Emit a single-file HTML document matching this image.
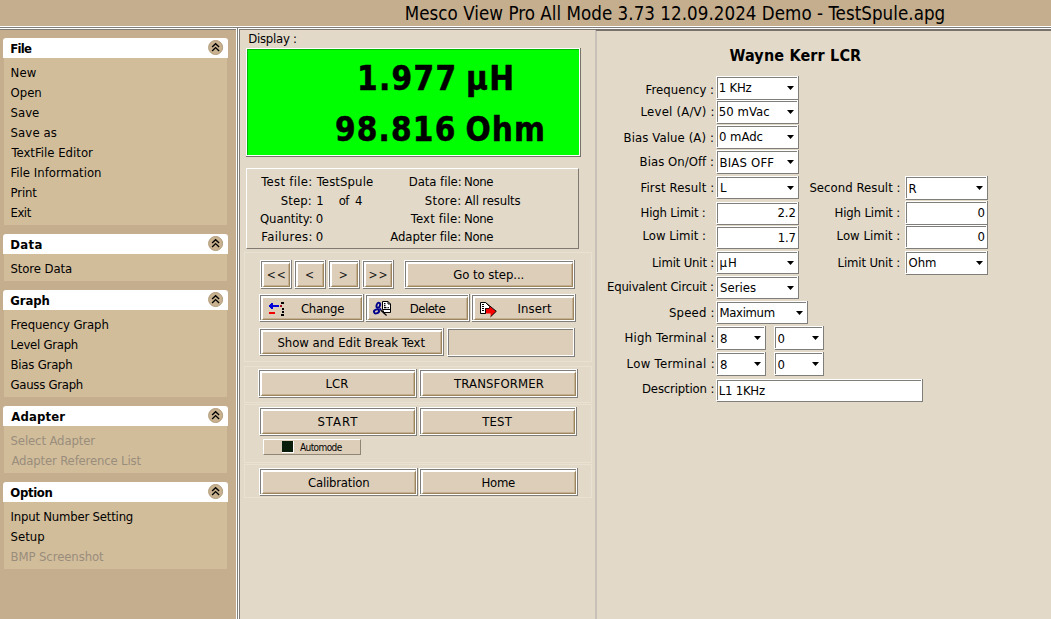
<!DOCTYPE html>
<html><head><meta charset="utf-8"><title>Mesco View Pro</title><style>
html,body{margin:0;padding:0;}
body{width:1051px;height:619px;position:relative;overflow:hidden;background:#c5ae8d;font-family:"DejaVu Sans Condensed","DejaVu Sans","Liberation Sans",sans-serif;font-size:13px;font-stretch:condensed;color:#000;}
body>div,body>svg{position:absolute;box-sizing:border-box;}
.t{white-space:nowrap;line-height:20px;height:20px;}
.b{font-weight:bold;}
.dis{color:#998d7b;}
.big{font-size:33px;font-weight:bold;letter-spacing:0.9px;line-height:40px;height:40px;-webkit-text-stroke:0.5px #000;}
.fg{border:1px solid #807e7a;}
.fw{border:1px solid #fff;}
.btn{background:#ddceb9;border-style:solid;border-width:2px 1px 1px 2px;border-color:#fff #9c845c #9c845c #fff;box-shadow:inset -1px -1px 0 rgba(150,118,74,0.35);}
</style></head><body>
<div style="left:0px;top:0px;width:1051px;height:26px;background:#c5ae8d;"></div>
<div class="t" style="left:404.80px;top:0px;font-size:18.6px;line-height:27px;height:27px;letter-spacing:0.04px;">Mesco View Pro All Mode 3.73 12.09.2024 Demo - TestSpule.apg</div>
<div style="left:0px;top:26px;width:1051px;height:1px;background:#fff;"></div>
<div style="left:0px;top:27px;width:1051px;height:1px;background:#807e7a;"></div>
<div style="left:0px;top:28px;width:1051px;height:1px;background:#fff;"></div>
<div style="left:0px;top:29px;width:1051px;height:1px;background:#7f7a74;"></div>
<div style="left:0px;top:30px;width:236px;height:589px;background:#c5ae8d;"></div>
<div style="left:236px;top:28px;width:1px;height:591px;background:#fff;"></div>
<div style="left:237px;top:27px;width:1px;height:592px;background:#807e7a;"></div>
<div style="left:238px;top:28px;width:1px;height:591px;background:#fff;"></div>
<div style="left:239px;top:29px;width:1px;height:590px;background:#7f7a74;"></div>
<div style="left:240px;top:30px;width:811px;height:589px;background:#e2d9c8;"></div>
<div style="left:595px;top:30px;width:2px;height:589px;background:#c9c1b8;"></div>
<div style="left:596px;top:29px;width:455px;height:2px;background:#77726c;"></div>
<div style="left:4px;top:58px;width:223px;height:167px;background:#d2bd9b;"></div>
<div style="left:3px;top:38px;width:225px;height:20px;background:#fff;border-radius:3px 3px 0 0;"></div>
<div class="t" style="left:10.30px;top:39px;font-weight:bold;letter-spacing:-0.77px;">File</div>
<svg style="left:208px;top:40px" width="16" height="16" viewBox="0 0 16 16"><circle cx="7.6" cy="7.5" r="7" fill="#c9b28f" stroke="#b09a78" stroke-width="1"/><path d="M4.1 7.1 L7.6 3.7 L11.1 7.1 M4.1 11 L7.6 7.6 L11.1 11" fill="none" stroke="#000" stroke-width="1.35"/></svg>
<div class="t" style="left:10.50px;top:63px;letter-spacing:0.15px;">New</div>
<div class="t" style="left:10.50px;top:83px;">Open</div>
<div class="t" style="left:10.50px;top:103px;letter-spacing:0.03px;">Save</div>
<div class="t" style="left:10.50px;top:123px;letter-spacing:0.13px;">Save as</div>
<div class="t" style="left:11.50px;top:143px;letter-spacing:0.01px;">TextFile Editor</div>
<div class="t" style="left:10.50px;top:163px;letter-spacing:0.01px;">File Information</div>
<div class="t" style="left:10.50px;top:183px;letter-spacing:-0.12px;">Print</div>
<div class="t" style="left:10.50px;top:203px;letter-spacing:-0.47px;">Exit</div>
<div style="left:4px;top:254px;width:223px;height:27px;background:#d2bd9b;"></div>
<div style="left:3px;top:234px;width:225px;height:20px;background:#fff;border-radius:3px 3px 0 0;"></div>
<div class="t" style="left:10.30px;top:235px;font-weight:bold;letter-spacing:0.33px;">Data</div>
<svg style="left:208px;top:236px" width="16" height="16" viewBox="0 0 16 16"><circle cx="7.6" cy="7.5" r="7" fill="#c9b28f" stroke="#b09a78" stroke-width="1"/><path d="M4.1 7.1 L7.6 3.7 L11.1 7.1 M4.1 11 L7.6 7.6 L11.1 11" fill="none" stroke="#000" stroke-width="1.35"/></svg>
<div class="t" style="left:10.50px;top:259px;letter-spacing:-0.10px;">Store Data</div>
<div style="left:4px;top:310px;width:223px;height:87px;background:#d2bd9b;"></div>
<div style="left:3px;top:290px;width:225px;height:20px;background:#fff;border-radius:3px 3px 0 0;"></div>
<div class="t" style="left:10.30px;top:291px;font-weight:bold;letter-spacing:-0.12px;">Graph</div>
<svg style="left:208px;top:292px" width="16" height="16" viewBox="0 0 16 16"><circle cx="7.6" cy="7.5" r="7" fill="#c9b28f" stroke="#b09a78" stroke-width="1"/><path d="M4.1 7.1 L7.6 3.7 L11.1 7.1 M4.1 11 L7.6 7.6 L11.1 11" fill="none" stroke="#000" stroke-width="1.35"/></svg>
<div class="t" style="left:10.50px;top:315px;letter-spacing:-0.11px;">Frequency Graph</div>
<div class="t" style="left:10.50px;top:335px;letter-spacing:-0.27px;">Level Graph</div>
<div class="t" style="left:10.50px;top:355px;letter-spacing:-0.21px;">Bias Graph</div>
<div class="t" style="left:10.50px;top:375px;letter-spacing:-0.27px;">Gauss Graph</div>
<div style="left:4px;top:426px;width:223px;height:47px;background:#d2bd9b;"></div>
<div style="left:3px;top:406px;width:225px;height:20px;background:#fff;border-radius:3px 3px 0 0;"></div>
<div class="t" style="left:11.30px;top:407px;font-weight:bold;letter-spacing:0.12px;">Adapter</div>
<svg style="left:208px;top:408px" width="16" height="16" viewBox="0 0 16 16"><circle cx="7.6" cy="7.5" r="7" fill="#c9b28f" stroke="#b09a78" stroke-width="1"/><path d="M4.1 7.1 L7.6 3.7 L11.1 7.1 M4.1 11 L7.6 7.6 L11.1 11" fill="none" stroke="#000" stroke-width="1.35"/></svg>
<div class="t dis" style="left:10.50px;top:431px;letter-spacing:-0.12px;">Select Adapter</div>
<div class="t dis" style="left:11.50px;top:451px;letter-spacing:-0.17px;">Adapter Reference List</div>
<div style="left:4px;top:502px;width:223px;height:67px;background:#d2bd9b;"></div>
<div style="left:3px;top:482px;width:225px;height:20px;background:#fff;border-radius:3px 3px 0 0;"></div>
<div class="t" style="left:10.30px;top:483px;font-weight:bold;letter-spacing:-0.34px;">Option</div>
<svg style="left:208px;top:484px" width="16" height="16" viewBox="0 0 16 16"><circle cx="7.6" cy="7.5" r="7" fill="#c9b28f" stroke="#b09a78" stroke-width="1"/><path d="M4.1 7.1 L7.6 3.7 L11.1 7.1 M4.1 11 L7.6 7.6 L11.1 11" fill="none" stroke="#000" stroke-width="1.35"/></svg>
<div class="t" style="left:10.50px;top:507px;letter-spacing:-0.20px;">Input Number Setting</div>
<div class="t" style="left:10.50px;top:527px;letter-spacing:0.05px;">Setup</div>
<div class="t dis" style="left:10.50px;top:547px;letter-spacing:-0.09px;">BMP Screenshot</div>
<div class="t" style="left:248.20px;top:29px;letter-spacing:-0.24px;">Display :</div>
<div style="left:246px;top:48px;width:335px;height:109px;background:#77736c;"></div>
<div style="left:246px;top:48px;width:334px;height:108px;background:#fff;"></div>
<div style="left:247px;top:49px;width:332px;height:106px;background:#00ff00;box-shadow:inset 1px 1px 0 rgba(0,90,0,0.45);"></div>
<div class="t big" style="left:357px;top:59px;word-spacing:-3px;letter-spacing:1.3px;">1.977 µH</div>
<div class="t big" style="left:335px;top:110px;word-spacing:-2.5px;letter-spacing:1.15px;">98.816 Ohm</div>
<div style="left:246px;top:168px;width:333px;height:81px;border:1px solid;border-color:#fff #807a70 #807a70 #fff;"></div>
<div class="t" style="left:261.30px;top:172px;letter-spacing:0.30px;">Test file:</div>
<div class="t" style="left:316.80px;top:172px;letter-spacing:0.11px;">TestSpule</div>
<div class="t" style="left:408.70px;top:172px;letter-spacing:-0.04px;">Data file:</div>
<div class="t" style="left:464.00px;top:172px;letter-spacing:-0.33px;">None</div>
<div class="t" style="left:280.80px;top:191px;letter-spacing:0.05px;">Step:</div>
<div class="t" style="left:316.30px;top:191px;">1</div>
<div class="t" style="left:424.80px;top:191px;letter-spacing:0.30px;">Store:</div>
<div class="t" style="left:464.70px;top:191px;letter-spacing:-0.14px;">All results</div>
<div class="t" style="left:260.00px;top:209px;letter-spacing:-0.12px;">Quantity:</div>
<div class="t" style="left:315.80px;top:209px;">0</div>
<div class="t" style="left:410.80px;top:209px;letter-spacing:0.17px;">Text file:</div>
<div class="t" style="left:464.00px;top:209px;letter-spacing:-0.33px;">None</div>
<div class="t" style="left:261.30px;top:227px;letter-spacing:0.34px;">Failures:</div>
<div class="t" style="left:315.80px;top:227px;">0</div>
<div class="t" style="left:390.30px;top:227px;letter-spacing:-0.08px;">Adapter file:</div>
<div class="t" style="left:464.00px;top:227px;letter-spacing:-0.33px;">None</div>
<div class="t" style="left:338.70px;top:191px;letter-spacing:-0.50px;">of</div>
<div class="t" style="left:355.00px;top:191px;">4</div>
<div class="fg" style="left:261px;top:261px;width:31px;height:28px;"></div>
<div class="fw" style="left:260px;top:260px;width:31px;height:28px;"></div>
<div style="left:291px;top:260px;width:1px;height:1px;background:#807e7a"></div>
<div class="btn" style="left:262px;top:262px;width:28px;height:25px;"></div>
<div class="t" style="left:266.80px;top:265px;font-size:12px;letter-spacing:0.80px;color:#1a1a1a;">&lt;&lt;</div>
<div class="fg" style="left:295px;top:261px;width:31px;height:28px;"></div>
<div class="fw" style="left:294px;top:260px;width:31px;height:28px;"></div>
<div style="left:325px;top:260px;width:1px;height:1px;background:#807e7a"></div>
<div class="btn" style="left:296px;top:262px;width:28px;height:25px;"></div>
<div class="t" style="left:305.00px;top:265px;font-size:12px;color:#1a1a1a;">&lt;</div>
<div class="fg" style="left:329px;top:261px;width:31px;height:28px;"></div>
<div class="fw" style="left:328px;top:260px;width:31px;height:28px;"></div>
<div style="left:359px;top:260px;width:1px;height:1px;background:#807e7a"></div>
<div class="btn" style="left:330px;top:262px;width:28px;height:25px;"></div>
<div class="t" style="left:338.70px;top:265px;font-size:12px;color:#1a1a1a;">&gt;</div>
<div class="fg" style="left:363px;top:261px;width:31px;height:28px;"></div>
<div class="fw" style="left:362px;top:260px;width:31px;height:28px;"></div>
<div style="left:393px;top:260px;width:1px;height:1px;background:#807e7a"></div>
<div class="btn" style="left:364px;top:262px;width:28px;height:25px;"></div>
<div class="t" style="left:368.40px;top:265px;font-size:12px;letter-spacing:1.00px;color:#1a1a1a;">&gt;&gt;</div>
<div class="fg" style="left:405px;top:261px;width:170px;height:28px;"></div>
<div class="fw" style="left:404px;top:260px;width:170px;height:28px;"></div>
<div style="left:574px;top:260px;width:1px;height:1px;background:#807e7a"></div>
<div class="btn" style="left:406px;top:262px;width:167px;height:25px;"></div>
<div class="t" style="left:453.20px;top:265px;letter-spacing:-0.06px;">Go to step...</div>
<div class="fg" style="left:260px;top:295px;width:104px;height:27px;"></div>
<div class="fw" style="left:259px;top:294px;width:104px;height:27px;"></div>
<div style="left:363px;top:294px;width:1px;height:1px;background:#807e7a"></div>
<div class="btn" style="left:261px;top:296px;width:101px;height:24px;"></div>
<svg style="left:266px;top:300px" width="20" height="18" viewBox="266 300 20 18" shape-rendering="crispEdges"><rect x="270" y="305" width="9" height="2" fill="#0000d8"/><path d="M269 305h1v-1h1v-1h2v6h-2v-1h-1v-1h-1z" fill="#0000d8"/><rect x="269" y="312" width="6" height="2" fill="#f00000"/><rect x="280" y="305" width="2" height="2" fill="#a01020"/><rect x="281" y="302" width="3" height="2" fill="#000"/><rect x="282" y="308" width="2" height="2" fill="#000"/><rect x="282" y="311" width="2" height="2" fill="#000"/><rect x="281" y="314" width="3" height="2" fill="#000"/></svg>
<div class="t" style="left:300.90px;top:299px;letter-spacing:-0.26px;">Change</div>
<div class="fg" style="left:366px;top:295px;width:104px;height:27px;"></div>
<div class="fw" style="left:365px;top:294px;width:104px;height:27px;"></div>
<div style="left:469px;top:294px;width:1px;height:1px;background:#807e7a"></div>
<div class="btn" style="left:367px;top:296px;width:101px;height:24px;"></div>
<svg style="left:372px;top:299px" width="22" height="19" viewBox="372 299 22 19"><path d="M382.500 301.500h5.500l2.500 2.500v8.500h-6.500l-1.500-3z" fill="#fff" stroke="#000" stroke-width="1"/><path d="M388 301.500v2.500h2.500" fill="none" stroke="#000" stroke-width="1"/><path d="M382.500 309.500h8" stroke="#000" stroke-width="1"/><rect x="384" y="303" width="1.500" height="1.300" fill="#000"/><rect x="384" y="305" width="1.500" height="1.300" fill="#000"/><rect x="384" y="307" width="2.500" height="1.300" fill="#000"/><rect x="387.500" y="307" width="1.300" height="1.300" fill="#000"/><ellipse cx="378.300" cy="305.300" rx="1.700" ry="2.500" transform="rotate(20 378.300 305.300)" fill="none" stroke="#00008c" stroke-width="1.900"/><ellipse cx="376.500" cy="311.400" rx="2.600" ry="1.900" transform="rotate(-20 376.500 311.400)" fill="none" stroke="#00008c" stroke-width="1.900"/><path d="M379.500 308.500l1.500 1.500" stroke="#00008c" stroke-width="2"/><path d="M380.800 310.300L386.600 315.400" stroke="#000" stroke-width="1.300"/></svg>
<div class="t" style="left:409.80px;top:299px;letter-spacing:-0.52px;">Delete</div>
<div class="fg" style="left:472px;top:295px;width:104px;height:27px;"></div>
<div class="fw" style="left:471px;top:294px;width:104px;height:27px;"></div>
<div style="left:575px;top:294px;width:1px;height:1px;background:#807e7a"></div>
<div class="btn" style="left:473px;top:296px;width:101px;height:24px;"></div>
<svg style="left:479px;top:301px" width="20" height="18" viewBox="479 301 20 18"><path d="M480.500 302.500h5l4 4v2h-4v5h-5z" fill="#fff" stroke="#000" stroke-width="1"/><path d="M485.600 308.800h4v-2.600l6.600 5.100l-5.600 5.400v-3.300h-5z" fill="#f80000"/><path d="M485.500 302.500L496.300 311.300L490.500 316.800" fill="none" stroke="#000" stroke-width="1"/><path d="M485.500 308.500v5" stroke="#000" stroke-width="1"/><path d="M482 304.500h2M482 306.500h2M482 308.500h2M482 310.500h2" stroke="#000" stroke-width="1"/><path d="M486 304l2 2.500h-2z" fill="#fff"/></svg>
<div class="t" style="left:517.40px;top:299px;letter-spacing:0.12px;">Insert</div>
<div class="fg" style="left:260px;top:329px;width:184px;height:27px;"></div>
<div class="fw" style="left:259px;top:328px;width:184px;height:27px;"></div>
<div style="left:443px;top:328px;width:1px;height:1px;background:#807e7a"></div>
<div class="btn" style="left:261px;top:330px;width:181px;height:24px;"></div>
<div class="t" style="left:277.40px;top:333px;letter-spacing:-0.02px;">Show and Edit Break Text</div>
<div class="fg" style="left:448px;top:329px;width:127px;height:28px;background:#ddceb9;"></div>
<div class="fw" style="left:447px;top:328px;width:127px;height:28px;"></div>
<div style="left:574px;top:328px;width:1px;height:1px;background:#807e7a"></div>
<div class="fg" style="left:259px;top:370px;width:158px;height:28px;"></div>
<div class="fw" style="left:258px;top:369px;width:158px;height:28px;"></div>
<div style="left:416px;top:369px;width:1px;height:1px;background:#807e7a"></div>
<div class="btn" style="left:260px;top:371px;width:155px;height:25px;"></div>
<div class="t" style="left:325.50px;top:374px;letter-spacing:0.05px;">LCR</div>
<div class="fg" style="left:420px;top:370px;width:158px;height:28px;"></div>
<div class="fw" style="left:419px;top:369px;width:158px;height:28px;"></div>
<div style="left:577px;top:369px;width:1px;height:1px;background:#807e7a"></div>
<div class="btn" style="left:421px;top:371px;width:155px;height:25px;"></div>
<div class="t" style="left:454.10px;top:374px;letter-spacing:0.12px;">TRANSFORMER</div>
<div class="fg" style="left:260px;top:408px;width:157px;height:28px;"></div>
<div class="fw" style="left:259px;top:407px;width:157px;height:28px;"></div>
<div style="left:416px;top:407px;width:1px;height:1px;background:#807e7a"></div>
<div class="btn" style="left:261px;top:409px;width:154px;height:25px;"></div>
<div class="t" style="left:317.40px;top:412px;letter-spacing:1.05px;">START</div>
<div class="fg" style="left:420px;top:408px;width:157px;height:28px;"></div>
<div class="fw" style="left:419px;top:407px;width:157px;height:28px;"></div>
<div style="left:576px;top:407px;width:1px;height:1px;background:#807e7a"></div>
<div class="btn" style="left:421px;top:409px;width:154px;height:25px;"></div>
<div class="t" style="left:482.20px;top:412px;letter-spacing:0.20px;">TEST</div>
<div style="left:263px;top:439px;width:98px;height:16px;border:1px solid;border-color:#fff #8f8676 #8f8676 #fff;background:#ddceb9"></div>
<div style="left:282px;top:441px;width:12px;height:12px;background:#fff;"></div>
<div style="left:282px;top:441px;width:11px;height:11px;background:#0a1c0a;"></div>
<div class="t" style="left:300.00px;top:438px;font-size:10px;letter-spacing:-0.59px;">Automode</div>
<div class="fg" style="left:260px;top:469px;width:158px;height:27px;"></div>
<div class="fw" style="left:259px;top:468px;width:158px;height:27px;"></div>
<div style="left:417px;top:468px;width:1px;height:1px;background:#807e7a"></div>
<div class="btn" style="left:261px;top:470px;width:155px;height:24px;"></div>
<div class="t" style="left:308.00px;top:473px;letter-spacing:-0.20px;">Calibration</div>
<div class="fg" style="left:420px;top:469px;width:158px;height:27px;"></div>
<div class="fw" style="left:419px;top:468px;width:158px;height:27px;"></div>
<div style="left:577px;top:468px;width:1px;height:1px;background:#807e7a"></div>
<div class="btn" style="left:421px;top:470px;width:155px;height:24px;"></div>
<div class="t" style="left:481.40px;top:473px;letter-spacing:-0.23px;">Home</div>
<div style="left:244px;top:252px;width:348px;height:110px;border:1px solid #e9e2d3;"></div>
<div style="left:244px;top:366px;width:348px;height:37px;border:1px solid #e9e2d3;"></div>
<div style="left:244px;top:404px;width:348px;height:59px;border:1px solid #e9e2d3;"></div>
<div style="left:244px;top:464px;width:348px;height:34px;border:1px solid #e9e2d3;"></div>
<div class="t" style="left:729.50px;top:44px;font-size:16px;line-height:24px;height:24px;font-weight:bold;letter-spacing:0.16px;">Wayne Kerr LCR</div>
<div class="t" style="left:645.60px;top:80px;letter-spacing:0.05px;">Frequency :</div>
<div class="fg" style="left:717px;top:77px;width:82px;height:23px;background:#fff;"></div>
<div class="fw" style="left:716px;top:76px;width:82px;height:23px;"></div>
<div style="left:798px;top:76px;width:1px;height:1px;background:#807e7a"></div>
<div class="t" style="left:718.70px;top:78px;letter-spacing:-0.18px;">1 KHz</div>
<svg style="left:787px;top:86px" width="7" height="4" viewBox="0 0 7 4"><path d="M0 0h7l-3.500 4z" fill="#000"/></svg>
<div class="t" style="left:640.60px;top:102px;letter-spacing:0.21px;">Level (A/V) :</div>
<div class="fg" style="left:717px;top:101px;width:82px;height:23px;background:#fff;"></div>
<div class="fw" style="left:716px;top:100px;width:82px;height:23px;"></div>
<div style="left:798px;top:100px;width:1px;height:1px;background:#807e7a"></div>
<div class="t" style="left:718.70px;top:102px;letter-spacing:0.07px;">50 mVac</div>
<svg style="left:787px;top:110px" width="7" height="4" viewBox="0 0 7 4"><path d="M0 0h7l-3.500 4z" fill="#000"/></svg>
<div class="t" style="left:623.60px;top:128px;letter-spacing:0.10px;">Bias Value (A) :</div>
<div class="fg" style="left:717px;top:126px;width:82px;height:23px;background:#fff;"></div>
<div class="fw" style="left:716px;top:125px;width:82px;height:23px;"></div>
<div style="left:798px;top:125px;width:1px;height:1px;background:#807e7a"></div>
<div class="t" style="left:718.90px;top:127px;letter-spacing:-0.02px;">0 mAdc</div>
<svg style="left:787px;top:135px" width="7" height="4" viewBox="0 0 7 4"><path d="M0 0h7l-3.500 4z" fill="#000"/></svg>
<div class="t" style="left:639.60px;top:152px;letter-spacing:0.04px;">Bias On/Off :</div>
<div class="fg" style="left:717px;top:151px;width:82px;height:23px;background:#fff;"></div>
<div class="fw" style="left:716px;top:150px;width:82px;height:23px;"></div>
<div style="left:798px;top:150px;width:1px;height:1px;background:#807e7a"></div>
<div class="t" style="left:719.50px;top:153px;letter-spacing:0.19px;">BIAS OFF</div>
<svg style="left:787px;top:160px" width="7" height="4" viewBox="0 0 7 4"><path d="M0 0h7l-3.500 4z" fill="#000"/></svg>
<div class="t" style="left:640.60px;top:178px;letter-spacing:0.12px;">First Result :</div>
<div class="fg" style="left:717px;top:177px;width:82px;height:22px;background:#fff;"></div>
<div class="fw" style="left:716px;top:176px;width:82px;height:22px;"></div>
<div style="left:798px;top:176px;width:1px;height:1px;background:#807e7a"></div>
<div class="t" style="left:719.90px;top:178px;">L</div>
<svg style="left:787px;top:186px" width="7" height="4" viewBox="0 0 7 4"><path d="M0 0h7l-3.500 4z" fill="#000"/></svg>
<div class="t" style="left:809.40px;top:178px;letter-spacing:0.04px;">Second Result :</div>
<div class="fg" style="left:906px;top:177px;width:82px;height:23px;background:#fff;"></div>
<div class="fw" style="left:905px;top:176px;width:82px;height:23px;"></div>
<div style="left:987px;top:176px;width:1px;height:1px;background:#807e7a"></div>
<div class="t" style="left:908.50px;top:179px;">R</div>
<svg style="left:976px;top:186px" width="7" height="4" viewBox="0 0 7 4"><path d="M0 0h7l-3.500 4z" fill="#000"/></svg>
<div class="t" style="left:640.60px;top:203px;letter-spacing:-0.19px;">High Limit :</div>
<div class="fg" style="left:717px;top:203px;width:82px;height:22px;background:#fff;"></div>
<div class="fw" style="left:716px;top:202px;width:82px;height:22px;"></div>
<div style="left:798px;top:202px;width:1px;height:1px;background:#807e7a"></div>
<div class="t" style="left:777.40px;top:203px;">2.2</div>
<div class="t" style="left:834.60px;top:203px;letter-spacing:-0.15px;">High Limit :</div>
<div class="fg" style="left:906px;top:202px;width:82px;height:23px;background:#fff;"></div>
<div class="fw" style="left:905px;top:201px;width:82px;height:23px;"></div>
<div style="left:987px;top:201px;width:1px;height:1px;background:#807e7a"></div>
<div class="t" style="left:977.40px;top:203px;">0</div>
<div class="t" style="left:642.60px;top:226px;letter-spacing:-0.01px;">Low Limit :</div>
<div class="fg" style="left:717px;top:227px;width:82px;height:22px;background:#fff;"></div>
<div class="fw" style="left:716px;top:226px;width:82px;height:22px;"></div>
<div style="left:798px;top:226px;width:1px;height:1px;background:#807e7a"></div>
<div class="t" style="left:777.80px;top:228px;letter-spacing:-0.20px;">1.7</div>
<div class="t" style="left:836.60px;top:226px;letter-spacing:0.03px;">Low Limit :</div>
<div class="fg" style="left:906px;top:226px;width:82px;height:23px;background:#fff;"></div>
<div class="fw" style="left:905px;top:225px;width:82px;height:23px;"></div>
<div style="left:987px;top:225px;width:1px;height:1px;background:#807e7a"></div>
<div class="t" style="left:977.40px;top:227px;">0</div>
<div class="t" style="left:652.00px;top:253px;letter-spacing:-0.17px;">Limit Unit :</div>
<div class="fg" style="left:717px;top:252px;width:82px;height:22px;background:#fff;"></div>
<div class="fw" style="left:716px;top:251px;width:82px;height:22px;"></div>
<div style="left:798px;top:251px;width:1px;height:1px;background:#807e7a"></div>
<div class="t" style="left:719.50px;top:253px;letter-spacing:1.00px;">µH</div>
<svg style="left:787px;top:261px" width="7" height="4" viewBox="0 0 7 4"><path d="M0 0h7l-3.500 4z" fill="#000"/></svg>
<div class="t" style="left:837.60px;top:253px;letter-spacing:-0.15px;">Limit Unit :</div>
<div class="fg" style="left:906px;top:252px;width:82px;height:23px;background:#fff;"></div>
<div class="fw" style="left:905px;top:251px;width:82px;height:23px;"></div>
<div style="left:987px;top:251px;width:1px;height:1px;background:#807e7a"></div>
<div class="t" style="left:908.50px;top:253px;">Ohm</div>
<svg style="left:976px;top:261px" width="7" height="4" viewBox="0 0 7 4"><path d="M0 0h7l-3.500 4z" fill="#000"/></svg>
<div class="t" style="left:607.00px;top:277px;letter-spacing:-0.21px;">Equivalent Circuit :</div>
<div class="fg" style="left:717px;top:277px;width:82px;height:22px;background:#fff;"></div>
<div class="fw" style="left:716px;top:276px;width:82px;height:22px;"></div>
<div style="left:798px;top:276px;width:1px;height:1px;background:#807e7a"></div>
<div class="t" style="left:719.90px;top:278px;letter-spacing:0.06px;">Series</div>
<svg style="left:787px;top:286px" width="7" height="4" viewBox="0 0 7 4"><path d="M0 0h7l-3.500 4z" fill="#000"/></svg>
<div class="t" style="left:669.00px;top:303px;letter-spacing:0.18px;">Speed :</div>
<div class="fg" style="left:717px;top:302px;width:91px;height:22px;background:#fff;"></div>
<div class="fw" style="left:716px;top:301px;width:91px;height:22px;"></div>
<div style="left:807px;top:301px;width:1px;height:1px;background:#807e7a"></div>
<div class="t" style="left:719.50px;top:303px;letter-spacing:-0.35px;">Maximum</div>
<svg style="left:796px;top:311px" width="7" height="4" viewBox="0 0 7 4"><path d="M0 0h7l-3.500 4z" fill="#000"/></svg>
<div class="t" style="left:624.60px;top:328px;letter-spacing:0.18px;">High Terminal :</div>
<div class="fg" style="left:717px;top:327px;width:49px;height:23px;background:#fff;"></div>
<div class="fw" style="left:716px;top:326px;width:49px;height:23px;"></div>
<div style="left:765px;top:326px;width:1px;height:1px;background:#807e7a"></div>
<div class="t" style="left:719.90px;top:329px;">8</div>
<svg style="left:754px;top:336px" width="7" height="4" viewBox="0 0 7 4"><path d="M0 0h7l-3.500 4z" fill="#000"/></svg>
<div class="fg" style="left:775px;top:327px;width:49px;height:23px;background:#fff;"></div>
<div class="fw" style="left:774px;top:326px;width:49px;height:23px;"></div>
<div style="left:823px;top:326px;width:1px;height:1px;background:#807e7a"></div>
<div class="t" style="left:777.40px;top:329px;">0</div>
<svg style="left:812px;top:336px" width="7" height="4" viewBox="0 0 7 4"><path d="M0 0h7l-3.500 4z" fill="#000"/></svg>
<div class="t" style="left:626.50px;top:354px;letter-spacing:0.35px;">Low Terminal :</div>
<div class="fg" style="left:717px;top:353px;width:49px;height:23px;background:#fff;"></div>
<div class="fw" style="left:716px;top:352px;width:49px;height:23px;"></div>
<div style="left:765px;top:352px;width:1px;height:1px;background:#807e7a"></div>
<div class="t" style="left:719.90px;top:355px;">8</div>
<svg style="left:754px;top:362px" width="7" height="4" viewBox="0 0 7 4"><path d="M0 0h7l-3.500 4z" fill="#000"/></svg>
<div class="fg" style="left:775px;top:353px;width:49px;height:23px;background:#fff;"></div>
<div class="fw" style="left:774px;top:352px;width:49px;height:23px;"></div>
<div style="left:823px;top:352px;width:1px;height:1px;background:#807e7a"></div>
<div class="t" style="left:777.40px;top:355px;">0</div>
<svg style="left:812px;top:362px" width="7" height="4" viewBox="0 0 7 4"><path d="M0 0h7l-3.500 4z" fill="#000"/></svg>
<div class="t" style="left:642.00px;top:379px;letter-spacing:-0.16px;">Description :</div>
<div class="fg" style="left:717px;top:380px;width:206px;height:22px;background:#fff;"></div>
<div class="fw" style="left:716px;top:379px;width:206px;height:22px;"></div>
<div style="left:922px;top:379px;width:1px;height:1px;background:#807e7a"></div>
<div class="t" style="left:718.70px;top:381px;letter-spacing:-0.22px;">L1 1KHz</div>
</body></html>
